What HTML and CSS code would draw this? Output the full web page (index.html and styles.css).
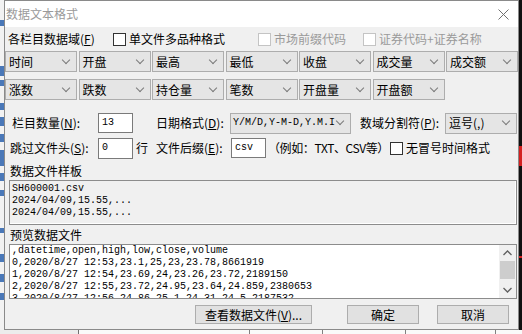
FILE: index.html
```html
<!DOCTYPE html>
<html lang="zh-CN">
<head>
<meta charset="UTF-8">
<title>数据文本格式</title>
<link rel="stylesheet" href="styles.css">
</head>
<body>
<div class="screen">
<div class="edgeLeft"></div>
<div class="dialog">
<div class="titleBar">
<span class="title">数据文本格式</span>
<svg class="closeBtn" width="11" height="11" viewBox="0 0 11 11"><path d="M0.5 0.5L10.5 10.5M10.5 0.5L0.5 10.5" stroke="#707070" stroke-width="1" fill="none"/></svg>
</div>
<div class="content">
<!-- field header + checkboxes -->
<div class="fieldsHead">
<span class="headLabel">各栏目数据域(<u>F</u>)</span>
<span class="check chkMulti"><i class="box"></i>单文件多品种格式</span>
<span class="check off chkPrefix"><i class="box"></i>市场前缀代码</span>
<span class="check off"><i class="box"></i>证券代码+证券名称</span>
</div>
<div class="combos">
<div class="combo">时间</div>
<div class="combo">开盘</div>
<div class="combo">最高</div>
<div class="combo">最低</div>
<div class="combo">收盘</div>
<div class="combo">成交量</div>
<div class="combo">成交额</div>
</div>
<div class="combos second">
<div class="combo">涨数</div>
<div class="combo">跌数</div>
<div class="combo">持仓量</div>
<div class="combo">笔数</div>
<div class="combo">开盘量</div>
<div class="combo">开盘额</div>
</div>
<!-- options -->
<div class="optRow">
<span class="lbl lblCount">栏目数量(<u>N</u>):</span>
<span class="textBox">13</span>
<span class="lbl lblDate">日期格式(<u>D</u>):</span>
<div class="combo dateCombo">Y/M/D,Y-M-D,Y.M.I</div>
<span class="lbl lblSep">数域分割符(<u>P</u>):</span>
<div class="combo sepCombo">逗号(,)</div>
</div>
<div class="optRow rowSkip">
<span class="lbl lblSkip">跳过文件头(<u>S</u>):</span>
<span class="textBox">0</span>
<span class="lbl lblLine">行</span>
<span class="lbl lblExt">文件后缀(<u>E</u>):</span>
<span class="textBox">csv</span>
<span class="lbl hint">（例如：TXT、CSV等）</span>
<span class="check"><i class="box"></i>无冒号时间格式</span>
</div>
<div class="sectionLabel">数据文件样板</div>
<div class="sample">
<div>SH600001.csv</div>
<div>2024/04/09,15.55,...</div>
<div>2024/04/09,15.55,...</div>
</div>
<div class="sectionLabel second">预览数据文件</div>
<div class="preview">
<div class="previewText">
<div>,datetime,open,high,low,close,volume</div>
<div>0,2020/8/27 12:53,23.1,25,23,23.78,8661919</div>
<div>1,2020/8/27 12:54,23.69,24,23.26,23.72,2189150</div>
<div>2,2020/8/27 12:55,23.72,24.95,23.64,24.859,2380653</div>
<div>3,2020/8/27 12:56,24.86,25.1,24.31,24.5,2187532</div>
</div>
<div class="scrollBar">
<svg width="17" height="16" viewBox="0 0 17 16"><path d="M4.5 10L8.5 6L12.5 10" stroke="#606060" stroke-width="1.3" fill="none"/></svg>
<div class="thumb"></div>
<div class="track"></div>
<svg width="17" height="16" viewBox="0 0 17 16"><path d="M4.5 6L8.5 10L12.5 6" stroke="#606060" stroke-width="1.3" fill="none"/></svg>
</div>
</div>
<div class="buttons">
<span class="btn btnView">查看数据文件(<u>V</u>)...</span>
<span class="btn btnOk">确定</span>
<span class="btn btnCancel">取消</span>
</div>
</div>
</div>
<div class="edgeRight"></div>
</div>
<div class="floor"></div>
</body>
</html>
```

FILE: styles.css
```css
* {
margin: 0;
padding: 0;
box-sizing: border-box;
}
body {
width: 522px;
height: 334px;
overflow: hidden;
background-color: #121212;
font-family: "Noto Sans CJK SC", "Liberation Sans", sans-serif;
font-size: 12px;
color: #000;
}
u {
text-decoration: underline;
text-underline-offset: 1px;
}
.screen {
display: flex;
height: 330px;
}
/* bits of the window behind */
.edgeLeft {
width: 4px;
background: linear-gradient(#f2f2f2 0 20px, #4a78b8 20px 26px, #f2f2f2 26px 66px, #4a78b8 66px 76px,
#f2f2f2 76px 80px, #4a78b8 80px 86px, #f2f2f2 86px 103px, #4a78b8 103px 110px, #f2f2f2 110px 117px,
#4a78b8 117px 126px, #f2f2f2 126px 134px, #4a78b8 134px 142px, #f2f2f2 142px 150px, #4a78b8 150px 166px,
#f2f2f2 166px 173px, #4a78b8 173px 181px, #f2f2f2 181px 190px, #4a78b8 190px 196px, #f2f2f2 196px 228px,
#4a78b8 228px 233px, #f2f2f2 233px 254px, #4a78b8 254px 262px, #f2f2f2 262px 274px, #4a78b8 274px 282px,
#f2f2f2 282px 293px, #4a78b8 293px 300px, #f2f2f2 300px);
}
.edgeRight {
flex: 1;
background: linear-gradient(#101010 0 146px, #d42020 146px 166px, #101010 166px 256px, #d42020 256px 258px, #101010 258px);
}
.floor {
height: 4px;
background: linear-gradient(to right, #ececec 0 78px, #707070 78px 79px, #fafafa 79px 249px, #808080 249px 250px,
#fafafa 250px 322px, #808080 322px 323px, #fafafa 323px 405px, #808080 405px 406px, #fafafa 406px 495px, #808080 495px 496px, #fafafa 496px);
}
.dialog {
width: 515px;
height: 330px;
border: 1px solid #8a8a8a;
background-color: #f0f0f0;
display: flex;
flex-direction: column;
}
.titleBar {
height: 26px;
background-color: #fff;
display: flex;
align-items: center;
justify-content: space-between;
padding: 0 9px 1px 1px;
}
.title {
color: #9a9a9a;
line-height: 14px;
}
.closeBtn {
margin-top: 2px;
}
.content {
display: flex;
flex-direction: column;
}
.fieldsHead {
margin-top: 5px;
height: 14px;
display: flex;
align-items: center;
padding-left: 3px;
line-height: 14px;
}
.headLabel {
width: 105px;
}
.check {
display: flex;
align-items: center;
line-height: 14px;
}
.check .box {
width: 13px;
height: 13px;
border: 1px solid #333;
background-color: #fff;
margin-right: 3px;
}
.check.off {
color: #9a9a9a;
}
.check.off .box {
border-color: #c4c4c4;
}
.chkMulti {
width: 145px;
}
.chkPrefix {
width: 105px;
}
.combos {
margin-top: 5px;
display: grid;
grid-template-columns: repeat(7, 1fr);
column-gap: 1.5px;
}
.combos.second {
margin-top: 7px;
}
.combo {
height: 21px;
border: 1px solid #adadad;
background-color: #e5e5e5;
display: flex;
align-items: center;
justify-content: space-between;
padding: 0 7px 0 3px;
line-height: 14px;
white-space: nowrap;
}
.combo::after {
content: "";
width: 5px;
height: 5px;
border-right: 1px solid #7a7a7a;
border-bottom: 1px solid #7a7a7a;
transform: translateY(-2px) rotate(45deg);
}
.optRow {
margin-top: 13px;
height: 20px;
display: flex;
align-items: center;
}
.optRow.rowSkip {
margin-top: 5px;
}
.lbl {
line-height: 14px;
white-space: nowrap;
}
.lblCount {
margin-left: 7px;
width: 86px;
}
.lblSkip {
margin-left: 5px;
width: 88px;
}
.lblDate {
margin-left: 23px;
width: 74px;
}
.lblLine {
margin-left: 3px;
width: 20px;
}
.lblExt {
width: 75px;
}
.lblSep {
margin-left: 9px;
width: 85px;
}
.textBox {
width: 35px;
height: 20px;
border: 1px solid #7a7a7a;
background-color: #fff;
padding-left: 3px;
font-family: "Liberation Mono", monospace;
font-size: 10px;
line-height: 17px;
}
.rowSkip .textBox:nth-of-type(2) {
height: 21px;
margin-top: 1px;
}
.dateCombo {
width: 121px;
font-family: "Liberation Mono", monospace;
font-size: 10px;
padding-left: 2px;
}
.sepCombo {
width: 72px;
}
.hint {
margin-left: 2px;
width: 122px;
letter-spacing: -0.4px;
}
.sectionLabel {
margin-top: 6px;
height: 14px;
line-height: 14px;
padding-left: 5px;
}
.sectionLabel.second {
margin-top: 3px;
}
.sample {
margin: 2px 1px 0 4px;
height: 45px;
border: 1px solid #8c8c8c;
box-shadow: inset -1px -1px 0 #fff;
padding: 2px 0 0 2px;
font-family: "Liberation Mono", monospace;
font-size: 10px;
line-height: 12px;
}
.preview {
margin: 2px 1px 0 4px;
height: 55px;
border: 1px solid #8c8c8c;
background-color: #fff;
display: flex;
overflow: hidden;
}
.previewText {
flex: 1;
padding-left: 2px;
font-family: "Liberation Mono", monospace;
font-size: 10px;
line-height: 12px;
white-space: nowrap;
overflow: hidden;
}
.scrollBar {
width: 18px;
border-left: 1px solid #fff;
background-color: #f0f0f0;
display: flex;
flex-direction: column;
}
.thumb {
height: 18px;
margin: 0 1px;
background-color: #cdcdcd;
}
.track {
flex: 1;
}
.buttons {
margin-top: 6px;
height: 19px;
display: flex;
justify-content: flex-end;
padding-right: 9px;
}
.btn {
height: 19px;
border: 1px solid #adadad;
background-color: #e1e1e1;
display: flex;
align-items: center;
justify-content: center;
line-height: 14px;
}
.btnView {
width: 117px;
}
.btnOk {
width: 72px;
margin-left: 35px;
}
.btnCancel {
width: 72px;
margin-left: 18px;
}
```
